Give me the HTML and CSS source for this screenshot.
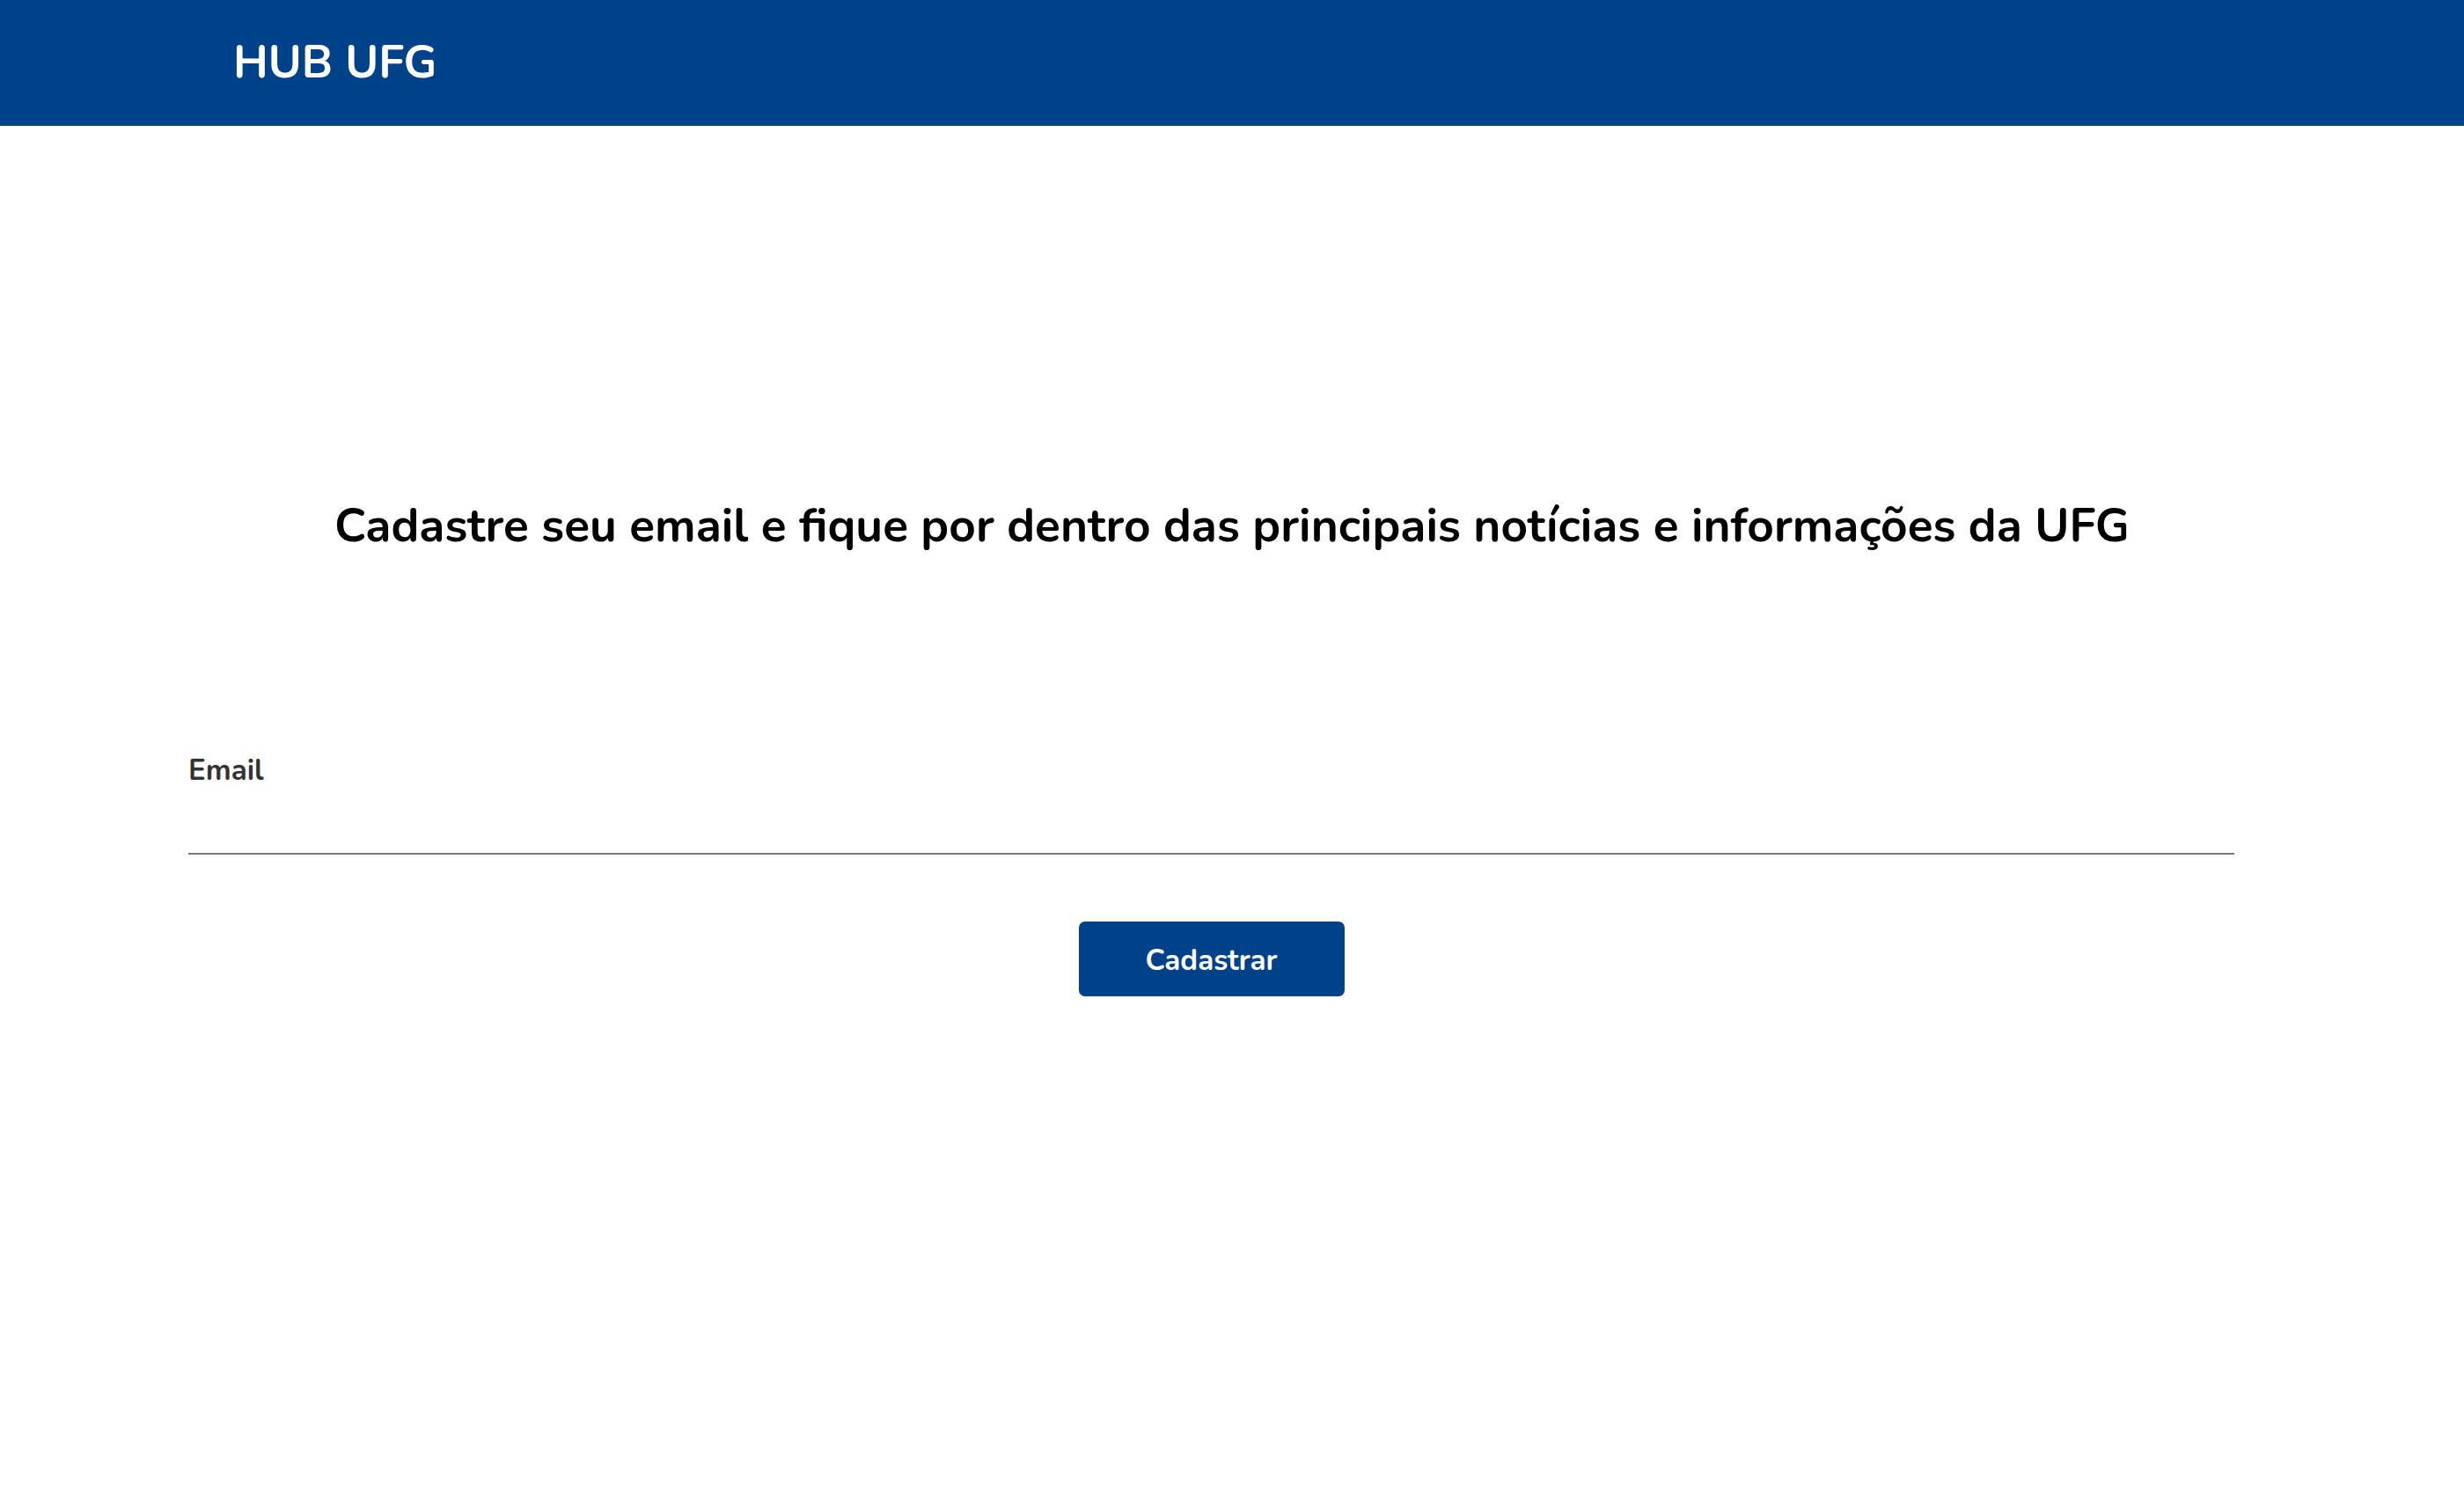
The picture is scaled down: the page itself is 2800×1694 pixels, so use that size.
FILE: index.html
```html
<!DOCTYPE html>
<html lang="pt-BR">
<head>
<meta charset="utf-8">
<title>HUB UFG</title>
<link rel="stylesheet" href="styles.css">
</head>
<body>
<header class="topbar">
  <span class="brand">HUB UFG</span>
</header>
<main class="content">
  <h1 class="headline">Cadastre seu email e fique por dentro das principais notícias e informações da UFG</h1>
  <form class="signup">
    <label class="field-label" for="email">Email</label>
    <input class="field-input" id="email" type="email">
    <div class="actions">
      <button class="submit" type="button">Cadastrar</button>
    </div>
  </form>
</main>
</body>
</html>
```
FILE: styles.css
```css
html, body {
  margin: 0;
  padding: 0;
  background: #ffffff;
  font-family: "Nunito", "Noto Sans", "Open Sans", sans-serif;
}
.topbar {
  height: 143px;
  background: #00428a;
  display: flex;
  align-items: center;
  padding-left: 265px;
  box-sizing: border-box;
}
.brand {
  color: #ffffff;
  font-size: 51.5px;
  font-weight: 700;
  line-height: 1;
}
.content {
  display: flex;
  flex-direction: column;
}
.headline {
  margin: 420px 0 0 0;
  text-align: center;
  font-size: 53.2px;
  font-weight: 700;
  line-height: 70px;
  color: #000000;
}
.signup {
  margin: 223px 0 0 214px;
  width: 2325px;
  display: flex;
  flex-direction: column;
}
.field-label {
  font-size: 33px;
  font-weight: 700;
  color: #333333;
  line-height: 40px;
}
.field-input {
  border: none;
  border-bottom: 2px solid #777777;
  height: 73px;
  padding: 0;
  outline: none;
  font-family: inherit;
  font-size: 32px;
}
.actions {
  display: flex;
  justify-content: center;
  margin-top: 76px;
}
.submit {
  width: 302px;
  height: 85px;
  padding-top: 4px;
  background: #00428a;
  color: #ffffff;
  border: none;
  border-radius: 7px;
  font-family: inherit;
  font-size: 33px;
  font-weight: 700;
}
```
